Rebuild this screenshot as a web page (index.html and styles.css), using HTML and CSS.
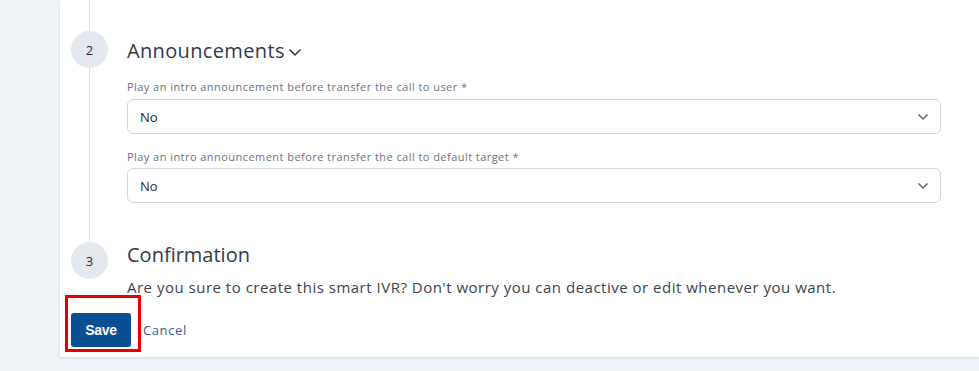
FILE: index.html
```html
<!DOCTYPE html>
<html>
<head>
    <title>Smart IVR</title>
    <link rel="stylesheet" href="styles.css">
</head>
<body>
    <div class="page">
        <div class="card">
            <div class="line-top"></div>

            <div class="step step-first">
                <div class="rail">
                    <div class="circle">2</div>
                    <div class="line"></div>
                </div>
                <div class="step-body">
                    <h3 class="step-title">Announcements
                        <svg class="title-chev" width="14" height="9" viewBox="0 0 14 9"><path d="M1.5 1.5 L7 7 L12.5 1.5" fill="none" stroke="#2b3445" stroke-width="1.5"/></svg>
                    </h3>
                    <label class="field-label">Play an intro announcement before transfer the call to user *</label>
                    <div class="select">
                        <span>No</span>
                        <svg width="12" height="8" viewBox="0 0 12 8"><path d="M1.5 1.5 L6 6 L10.5 1.5" fill="none" stroke="#5b6678" stroke-width="1.5"/></svg>
                    </div>
                    <label class="field-label">Play an intro announcement before transfer the call to default target *</label>
                    <div class="select">
                        <span>No</span>
                        <svg width="12" height="8" viewBox="0 0 12 8"><path d="M1.5 1.5 L6 6 L10.5 1.5" fill="none" stroke="#5b6678" stroke-width="1.5"/></svg>
                    </div>
                </div>
            </div>

            <div class="step step-last">
                <div class="rail">
                    <div class="circle">3</div>
                </div>
                <div class="step-body">
                    <h3 class="step-title">Confirmation</h3>
                    <p class="confirm-text">Are you sure to create this smart IVR? Don't worry you can deactive or edit whenever you want.</p>
                </div>
            </div>

            <div class="actions">
                <span class="save-wrap">
                    <button type="button" class="btn-save">Save</button>
                    <span class="highlight"></span>
                </span>
                <a class="btn-cancel">Cancel</a>
            </div>
        </div>
    </div>
</body>
</html>
```

FILE: styles.css
```css
body { margin: 0; background: #eff2f7; font-family: "Open Sans", sans-serif; color: #2b3445; }
.page { padding-left: 60px; height: 371px; }
.card { background: #fff; height: 357px; box-shadow: 0 1px 2px rgba(0,0,0,0.12); }

.line-top { width: 1px; height: 31px; margin-left: 29px; background: #dadfe5; }

.step { display: flex; }
.rail { width: 67px; display: flex; flex-direction: column; align-items: flex-start; }
.circle { width: 37px; height: 37px; margin-left: 11px; border-radius: 50%; background: #e3e8ef; display: flex; align-items: center; justify-content: center; font-size: 13px; color: #1f2733; flex-shrink: 0; }
.line { width: 1px; flex: 1; margin-left: 29px; background: #dadfe5; }

.step-body { flex: 1; padding-right: 38px; }
.step-title { margin: 7px 0 0; font-size: 20px; font-weight: 400; color: #2f3a4b; letter-spacing: 0.35px; line-height: 26px; display: flex; align-items: center; }
.title-chev { margin-left: 3px; margin-top: 3px; }
.field-label { display: block; margin-top: 16px; font-size: 11px; color: #6b7280; letter-spacing: 0.45px; line-height: 14px; }
.select { margin-top: 5px; height: 35px; border: 1px solid #d3d7dd; border-radius: 6px; box-sizing: border-box; display: flex; align-items: center; justify-content: space-between; padding: 0 11px 0 12px; font-size: 13px; color: #1f2733; }
.select + .field-label { margin-top: 16px; }
.select + .field-label + .select { margin-top: 4px; }
.step-first .step-body { padding-bottom: 39px; }

.step-last .step-title { margin-top: 0; letter-spacing: 0; }
.confirm-text { margin: 9px 0 0; font-size: 15px; line-height: 20px; color: #3b4352; letter-spacing: 0.5px; }

.actions { display: flex; align-items: center; padding-left: 11px; margin-top: 16px; }
.save-wrap { position: relative; display: inline-block; }
.btn-save { width: 60px; height: 34px; border: none; border-radius: 3px; background: #0b4f93; color: #fff; font-family: "Liberation Sans", Arial, sans-serif; font-weight: 700; font-size: 14px; letter-spacing: -0.3px; }
.highlight { position: absolute; left: -6px; top: -18px; width: 70px; height: 51px; border: 3px solid #e60000; }
.btn-cancel { margin-left: 12px; font-size: 13px; color: #3b5b8a; letter-spacing: 0.6px; }
```
